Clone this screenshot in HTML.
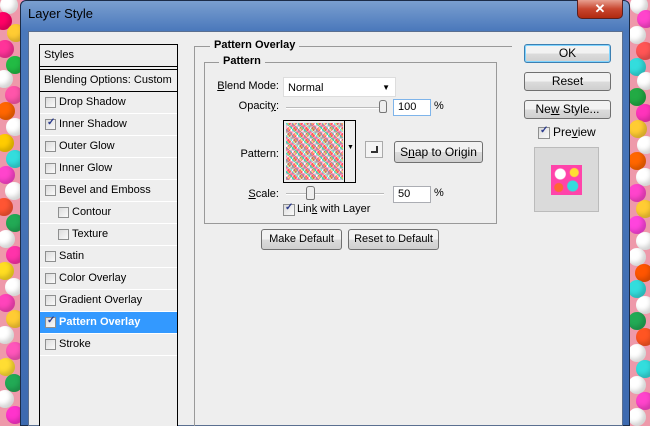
<!DOCTYPE html>
<html><head><style>
*{margin:0;padding:0;box-sizing:border-box}
body{width:650px;height:426px;overflow:hidden;position:relative;font-family:"Liberation Sans",sans-serif;font-size:11px;color:#000;background:#e8c;}
.abs{position:absolute}
.candy{position:absolute;top:0;height:426px;width:22px;overflow:hidden;background:#e9a}
.c{position:absolute;border-radius:50%;width:18px;height:18px;box-shadow:inset -3px -3px 5px rgba(0,0,0,.18)}
#win{left:20px;top:0;width:610px;height:426px;background:linear-gradient(#7a9fd0,#4a78bb 30px,#3d6ab0);border:1px solid #1c2c48;border-radius:6px 6px 0 0}
#content{left:28px;top:31px;width:595px;height:395px;background:#eeeeee;border:1px solid #5a6f90}
.list{left:39px;top:44px;width:139px;height:382px;border:1px solid #000;border-bottom:none;background:#eee}
.row{position:absolute;left:0;width:137px;height:22px;border-bottom:1px solid #fff;line-height:21px}
.cb{position:absolute;width:11px;height:11px;border:1px solid #8e8f8f;background:linear-gradient(135deg,#dcdcdc,#fafafa);top:5px;overflow:visible}
.chk::after{content:"✓";position:absolute;left:1px;top:-2px;font-size:10px;line-height:10px;color:#2a3a8c;font-weight:bold}
.btn{position:absolute;border:1px solid #707070;border-radius:3px;background:linear-gradient(#f2f2f2 50%,#dcdcdc 50%,#cfcfcf);text-align:center;font-size:12px}
.lbl{position:absolute;text-align:right}
.inp{position:absolute;background:#fff;border:1px solid #abadb3;height:17px;line-height:15px;padding-left:4px}
u{text-decoration:underline}
</style></head><body>
<div class="candy" style="left:0">
<div class="c" style="left:0;top:-4px;background:#fff"></div><div class="c" style="left:-6px;top:12px;background:#f06"></div><div class="c" style="left:7px;top:24px;background:#fc3"></div><div class="c" style="left:-4px;top:40px;background:#f39"></div><div class="c" style="left:6px;top:56px;background:#2b4"></div><div class="c" style="left:-5px;top:70px;background:#fff"></div><div class="c" style="left:5px;top:86px;background:#f5a"></div><div class="c" style="left:-3px;top:102px;background:#f60"></div><div class="c" style="left:6px;top:118px;background:#fff"></div><div class="c" style="left:-4px;top:134px;background:#fc0"></div><div class="c" style="left:6px;top:150px;background:#3dd"></div><div class="c" style="left:-3px;top:166px;background:#f4c"></div><div class="c" style="left:5px;top:182px;background:#fff"></div><div class="c" style="left:-5px;top:198px;background:#f53"></div><div class="c" style="left:6px;top:214px;background:#2a5"></div><div class="c" style="left:-3px;top:230px;background:#fff"></div><div class="c" style="left:6px;top:246px;background:#f3a"></div><div class="c" style="left:-4px;top:262px;background:#fd2"></div><div class="c" style="left:5px;top:278px;background:#fff"></div><div class="c" style="left:-3px;top:294px;background:#f4b"></div><div class="c" style="left:6px;top:310px;background:#fc3"></div><div class="c" style="left:-4px;top:326px;background:#fff"></div><div class="c" style="left:6px;top:342px;background:#f5b"></div><div class="c" style="left:-3px;top:358px;background:#fd3"></div><div class="c" style="left:5px;top:374px;background:#2a5"></div><div class="c" style="left:-4px;top:390px;background:#fff"></div><div class="c" style="left:6px;top:406px;background:#f3c"></div>
</div>
<div class="candy" style="left:628px">
<div class="c" style="left:2px;top:-4px;background:#fff"></div><div class="c" style="left:9px;top:10px;background:#f4c"></div><div class="c" style="left:0;top:26px;background:#fff"></div><div class="c" style="left:8px;top:42px;background:#f55"></div><div class="c" style="left:0;top:58px;background:#3dd"></div><div class="c" style="left:9px;top:72px;background:#fff"></div><div class="c" style="left:0;top:88px;background:#2a4"></div><div class="c" style="left:8px;top:104px;background:#f3b"></div><div class="c" style="left:1px;top:120px;background:#fc3"></div><div class="c" style="left:9px;top:136px;background:#fff"></div><div class="c" style="left:0;top:152px;background:#f60"></div><div class="c" style="left:8px;top:168px;background:#fff"></div><div class="c" style="left:0;top:184px;background:#f4c"></div><div class="c" style="left:8px;top:200px;background:#fc3"></div><div class="c" style="left:0;top:216px;background:#f4d"></div><div class="c" style="left:8px;top:232px;background:#fff"></div><div class="c" style="left:0;top:248px;background:#fff"></div><div class="c" style="left:7px;top:264px;background:#f50"></div><div class="c" style="left:0;top:280px;background:#3dd"></div><div class="c" style="left:8px;top:296px;background:#fff"></div><div class="c" style="left:0;top:312px;background:#2a5"></div><div class="c" style="left:8px;top:328px;background:#f52"></div><div class="c" style="left:0;top:344px;background:#fff"></div><div class="c" style="left:8px;top:360px;background:#3dd"></div><div class="c" style="left:0;top:376px;background:#fff"></div><div class="c" style="left:8px;top:392px;background:#f4c"></div><div class="c" style="left:0;top:408px;background:#fff"></div>
</div>
<div id="win" class="abs"></div>
<div class="abs" style="left:28px;top:6px;font-size:13px;color:#000">Layer Style</div>
<div class="abs" style="left:577px;top:-1px;width:46px;height:20px;border:1px solid #5a2020;border-radius:0 0 5px 5px;background:linear-gradient(#e8a090,#c8462f 50%,#b02a10);color:#fff;text-align:center;font-weight:bold;font-size:13px;line-height:17px">✕</div>
<div id="content" class="abs"></div>

<div class="list abs">
<div class="row" style="top:0;height:22px;border-bottom:1px solid #000;padding-left:4px">Styles</div>
<div class="row" style="top:24px;height:23px;border-top:1px solid #000;border-bottom:1px solid #000;padding-left:4px">Blending Options: Custom</div>
<div class="row" style="top:47px"><div class="cb" style="left:5px"></div><span class="abs" style="left:19px">Drop Shadow</span></div>
<div class="row" style="top:69px"><div class="cb chk" style="left:5px"></div><span class="abs" style="left:19px">Inner Shadow</span></div>
<div class="row" style="top:91px"><div class="cb" style="left:5px"></div><span class="abs" style="left:19px">Outer Glow</span></div>
<div class="row" style="top:113px"><div class="cb" style="left:5px"></div><span class="abs" style="left:19px">Inner Glow</span></div>
<div class="row" style="top:135px"><div class="cb" style="left:5px"></div><span class="abs" style="left:19px">Bevel and Emboss</span></div>
<div class="row" style="top:157px"><div class="cb" style="left:18px"></div><span class="abs" style="left:32px">Contour</span></div>
<div class="row" style="top:179px"><div class="cb" style="left:18px"></div><span class="abs" style="left:32px">Texture</span></div>
<div class="row" style="top:201px"><div class="cb" style="left:5px"></div><span class="abs" style="left:19px">Satin</span></div>
<div class="row" style="top:223px"><div class="cb" style="left:5px"></div><span class="abs" style="left:19px">Color Overlay</span></div>
<div class="row" style="top:245px"><div class="cb" style="left:5px"></div><span class="abs" style="left:19px">Gradient Overlay</span></div>
<div class="row" style="top:267px;background:#3399ff;color:#fff;font-weight:bold"><div class="cb chk" style="left:5px"></div><span class="abs" style="left:19px">Pattern Overlay</span></div>
<div class="row" style="top:289px"><div class="cb" style="left:5px"></div><span class="abs" style="left:19px">Stroke</span></div>
</div>

<div class="abs" style="left:194px;top:46px;width:318px;height:380px;border-left:1px solid #999;border-top:1px solid #999"></div>
<div class="abs" style="left:210px;top:39px;background:#eee;padding:0 4px;font-weight:bold">Pattern Overlay</div>
<div class="abs" style="left:204px;top:62px;width:293px;height:162px;border:1px solid #999"></div>
<div class="abs" style="left:219px;top:55px;background:#eee;padding:0 4px;font-weight:bold">Pattern</div>

<div class="lbl" style="left:200px;width:79px;top:80px"><u>B</u>lend Mode:</div>
<div class="inp" style="left:283px;top:77px;width:113px;height:20px;line-height:20px;border-color:#ddd">Normal<span class="abs" style="right:5px;top:0;font-size:8px">▼</span></div>
<div class="lbl" style="left:200px;width:79px;top:100px">Opacit<u>y</u>:</div>
<div class="abs" style="left:286px;top:107px;width:98px;height:2px;background:#bbb;border-bottom:1px solid #fff"></div>
<div class="abs" style="left:379px;top:100px;width:8px;height:13px;border:1px solid #777;border-radius:3px 3px 2px 2px;background:#eee"></div>
<div class="inp" style="left:393px;top:99px;width:38px;border-color:#7eb4ea">100</div>
<div class="abs" style="left:434px;top:100px">%</div>

<div class="lbl" style="left:200px;width:79px;top:148px">Pattern:</div>
<div class="abs" style="left:283px;top:120px;width:73px;height:63px;border:1px solid #000;background:#eee"></div>
<div class="abs" style="left:286px;top:123px;width:57px;height:57px;background:repeating-conic-gradient(#f46 0 10%,#fff 0 20%,#f8a 0 30%,#3cd 0 40%,#fc4 0 50%) 0 0/6px 6px,#f69;"></div>
<div class="abs" style="left:286px;top:123px;width:57px;height:57px;background:repeating-linear-gradient(45deg,rgba(255,80,120,.45) 0 3px,rgba(255,255,255,.35) 3px 5px,rgba(80,200,120,.3) 5px 7px)"></div>
<div class="abs" style="left:344px;top:120px;width:1px;height:63px;background:#000"></div>
<div class="abs" style="left:347px;top:144px;font-size:7px">▼</div>
<div class="abs" style="left:365px;top:141px;width:18px;height:17px;border:1px solid #aaa;background:#f4f4f4"><div class="abs" style="left:5px;top:4px;width:7px;height:7px;border-right:2px solid #333;border-bottom:2px solid #333"></div></div>
<div class="btn" style="left:394px;top:141px;width:89px;height:22px;line-height:20px">S<u>n</u>ap to Origin</div>

<div class="lbl" style="left:200px;width:79px;top:188px"><u>S</u>cale:</div>
<div class="abs" style="left:286px;top:193px;width:98px;height:2px;background:#bbb;border-bottom:1px solid #fff"></div>
<div class="abs" style="left:306px;top:186px;width:9px;height:14px;border:1px solid #777;border-radius:3px 3px 2px 2px;background:#eee"></div>
<div class="inp" style="left:393px;top:186px;width:38px">50</div>
<div class="abs" style="left:434px;top:187px">%</div>
<div class="cb chk" style="left:283px;top:204px;width:12px;height:12px"></div>
<div class="abs" style="left:297px;top:203px">Lin<u>k</u> with Layer</div>

<div class="btn" style="left:261px;top:229px;width:81px;height:21px;line-height:19px;font-size:11px">Make Default</div>
<div class="btn" style="left:348px;top:229px;width:91px;height:21px;line-height:19px;font-size:11px">Reset to Default</div>

<div class="btn" style="left:524px;top:44px;width:87px;height:19px;line-height:17px;border-color:#3c7fb1;box-shadow:inset 0 0 0 1px #7fd4ff">OK</div>
<div class="btn" style="left:524px;top:72px;width:87px;height:19px;line-height:17px">Reset</div>
<div class="btn" style="left:524px;top:100px;width:87px;height:19px;line-height:17px">Ne<u>w</u> Style...</div>
<div class="cb chk" style="left:538px;top:127px;width:12px;height:12px"></div>
<div class="abs" style="left:553px;top:125px;font-size:12px">Pre<u>v</u>iew</div>
<div class="abs" style="left:534px;top:147px;width:65px;height:65px;background:#dadada;border:1px solid #bbb"></div>
<div class="abs" style="left:551px;top:165px;width:31px;height:30px;background:radial-gradient(circle at 30% 30%,#fff 0 5px,transparent 6px),radial-gradient(circle at 75% 25%,#fd3 0 4px,transparent 5px),radial-gradient(circle at 70% 70%,#3dd 0 5px,transparent 6px),radial-gradient(circle at 25% 75%,#f63 0 4px,transparent 5px),#f4a"></div>
</body></html>
